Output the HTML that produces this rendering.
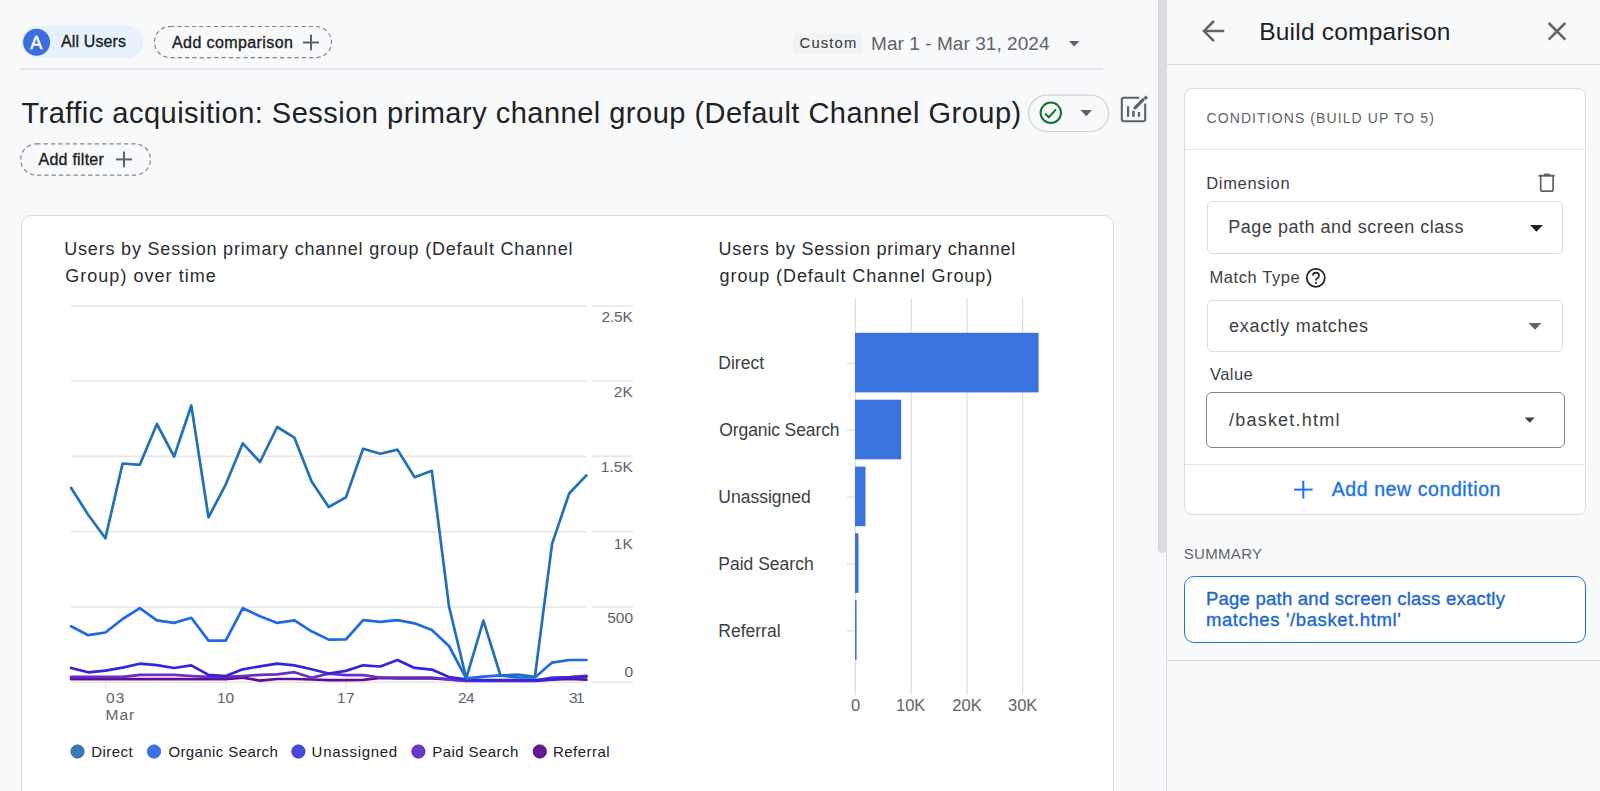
<!DOCTYPE html>
<html><head><meta charset="utf-8"><style>
html,body{margin:0;padding:0;}
body{width:1600px;height:791px;overflow:hidden;background:#f8f9fa;position:relative;font-family:"Liberation Sans",sans-serif;}
.abs{position:absolute;}
.t{position:absolute;white-space:nowrap;}
.box{position:absolute;box-sizing:border-box;}
</style></head><body>
<!-- top chips -->
<div class="box" style="left:21px;top:26px;width:122px;height:32px;border-radius:16px;background:#e8f0fe;"></div>

<div class="box" style="left:20px;top:68px;width:1083px;height:2px;background:#e3e5e8;"></div>
<div class="box" style="left:793.4px;top:33px;width:69.2px;height:21.4px;background:#f1f3f4;border-radius:2px;"></div>

<!-- main card -->
<div class="box" style="left:20.7px;top:215.3px;width:1093px;height:620px;border-radius:10px;border:1px solid #dadce0;background:#fff;"></div>
<!-- scrollbar & panel -->
<div class="box" style="left:1166px;top:0;width:1px;height:791px;background:#dadce0;"></div>
<div class="box" style="left:1158px;top:-10px;width:8.5px;height:562.5px;border-radius:0 0 4.5px 4.5px;background:#dadce0;border-left:1px solid #cfd1d5;"></div>
<div class="box" style="left:1167px;top:64px;width:433px;height:1px;background:#dadce0;"></div>
<div class="box" style="left:1183.8px;top:87.9px;width:402.6px;height:427.3px;border-radius:8px;border:1px solid #dadce0;background:#fff;"></div>
<div class="box" style="left:1184.5px;top:149px;width:401px;height:1px;background:#e3e5e8;"></div>
<div class="box" style="left:1184.5px;top:464px;width:401px;height:1px;background:#e3e5e8;"></div>
<div class="box" style="left:1206.8px;top:201.3px;width:356px;height:53px;border-radius:5px;border:1px solid #dadce0;"></div>
<div class="box" style="left:1207px;top:299.6px;width:356px;height:52.6px;border-radius:5px;border:1px solid #dadce0;"></div>
<div class="box" style="left:1205.5px;top:392.4px;width:359px;height:55.2px;border-radius:6px;border:1.2px solid #80868b;"></div>
<div class="box" style="left:1183.8px;top:576px;width:402.4px;height:67.3px;border-radius:10px;border:1.5px solid #1a73e8;background:#fff;"></div>
<div class="box" style="left:1167px;top:660px;width:433px;height:1.2px;background:#dadce0;"></div>

<svg class="abs" style="left:0;top:0" width="1160" height="791" viewBox="0 0 1160 791">
 <g stroke="#e6e6e8" stroke-width="1.6" fill="none">
  <line x1="71" y1="305.75" x2="586.5" y2="305.75"/><line x1="592" y1="305.75" x2="633" y2="305.75"/><line x1="71" y1="381.06" x2="586.5" y2="381.06"/><line x1="592" y1="381.06" x2="633" y2="381.06"/><line x1="71" y1="456.37" x2="586.5" y2="456.37"/><line x1="592" y1="456.37" x2="633" y2="456.37"/><line x1="71" y1="531.68" x2="586.5" y2="531.68"/><line x1="592" y1="531.68" x2="633" y2="531.68"/><line x1="71" y1="607.0" x2="586.5" y2="607.0"/><line x1="592" y1="607.0" x2="633" y2="607.0"/><line x1="71" y1="682.3" x2="586.5" y2="682.3"/><line x1="592" y1="682.3" x2="633" y2="682.3"/>
 </g>
 <g stroke="#e0e2e5" stroke-width="1">
  <line x1="105.4" y1="682" x2="105.4" y2="689"/><line x1="225.7" y1="682" x2="225.7" y2="689"/><line x1="345.9" y1="682" x2="345.9" y2="689"/><line x1="466.2" y1="682" x2="466.2" y2="689"/><line x1="586.4" y1="682" x2="586.4" y2="689"/>
 </g>
 <g fill="none" stroke-width="2.7" stroke-linejoin="round" stroke-linecap="round">
  <polyline stroke="#620c93" points="71.0,679.1 88.2,679.1 105.4,679.1 122.6,679.1 139.8,679.1 156.9,679.1 174.1,679.1 191.3,679.1 208.5,679.1 225.7,679.1 242.8,677.7 260.0,680.6 277.2,679.0 294.4,679.0 311.6,679.5 328.7,680.1 345.9,680.1 363.1,679.8 380.3,677.9 397.5,678.4 414.6,678.4 431.8,678.4 449.0,679.3 466.2,681.0 483.4,681.0 500.5,681.0 517.7,681.0 534.9,681.0 552.1,679.6 569.3,679.0 586.4,679.6"/>
  <polyline stroke="#682cc9" points="71.0,676.9 88.2,676.9 105.4,676.9 122.6,676.9 139.8,674.9 156.9,674.9 174.1,674.9 191.3,676.0 208.5,676.9 225.7,676.9 242.8,676.0 260.0,674.9 277.2,674.4 294.4,672.2 311.6,677.7 328.7,673.6 345.9,675.2 363.1,675.2 380.3,677.5 397.5,677.5 414.6,677.5 431.8,677.5 449.0,679.3 466.2,680.6 483.4,680.6 500.5,680.6 517.7,680.6 534.9,680.6 552.1,677.5 569.3,677.2 586.4,675.8"/>
  <polyline stroke="#3325de" points="71.0,668.0 88.2,672.3 105.4,670.7 122.6,667.6 139.8,663.7 156.9,665.1 174.1,668.0 191.3,665.4 208.5,674.9 225.7,676.1 242.8,669.3 260.0,666.3 277.2,663.7 294.4,665.4 311.6,669.3 328.7,673.5 345.9,670.9 363.1,665.3 380.3,666.5 397.5,660.0 414.6,667.9 431.8,669.6 449.0,677.0 466.2,679.3 483.4,680.1 500.5,680.1 517.7,680.1 534.9,680.1 552.1,679.3 569.3,677.5 586.4,676.6"/>
  <polyline stroke="#1f69e2" points="71.0,626.3 88.2,635.2 105.4,632.5 122.6,619.0 139.8,608.2 156.9,620.4 174.1,622.9 191.3,617.8 208.5,640.6 225.7,640.6 242.8,608.2 260.0,616.2 277.2,622.9 294.4,620.4 311.6,631.3 328.7,639.6 345.9,639.5 363.1,620.1 380.3,621.9 397.5,620.1 414.6,623.3 431.8,629.9 449.0,646.0 466.2,678.4 483.4,676.6 500.5,675.4 517.7,677.5 534.9,677.5 552.1,662.6 569.3,660.0 586.4,660.0"/>
  <polyline stroke="#2270b8" points="71.0,487.8 88.2,514.7 105.4,538.3 122.6,463.5 139.8,464.8 156.9,424.0 174.1,456.6 191.3,405.5 208.5,517.3 225.7,484.6 242.8,443.3 260.0,462.0 277.2,427.0 294.4,437.7 311.6,481.4 328.7,507.0 345.9,497.4 363.1,448.8 380.3,453.7 397.5,449.6 414.6,477.3 431.8,470.8 449.0,606.2 466.2,678.3 483.4,620.6 500.5,675.5 517.7,674.7 534.9,676.8 552.1,543.6 569.3,493.2 586.4,475.4"/>
 </g>
 <g>
  <circle cx="77.5" cy="751.5" r="6.6" fill="#3a78b5" stroke="#2f6db0" stroke-width="1"/>
  <circle cx="154" cy="751.5" r="6.6" fill="#3b74e0" stroke="#2f6ae0" stroke-width="1"/>
  <circle cx="298.4" cy="751.5" r="6.6" fill="#4848df" stroke="#3a38d8" stroke-width="1"/>
  <circle cx="418.4" cy="751.5" r="6.6" fill="#6a38c8" stroke="#5a2ac0" stroke-width="1"/>
  <circle cx="539.8" cy="751.5" r="6.6" fill="#66188f" stroke="#580c88" stroke-width="1"/>
 </g>
 <g stroke="#dadce0" stroke-width="1.2">
  <line x1="855.4" y1="298.6" x2="855.4" y2="695"/><line x1="911.2" y1="298.6" x2="911.2" y2="695"/><line x1="967" y1="298.6" x2="967" y2="695"/><line x1="1022.7" y1="298.6" x2="1022.7" y2="695"/>
  <line x1="847" y1="363.3" x2="855" y2="363.3"/><line x1="847" y1="430.2" x2="855" y2="430.2"/><line x1="847" y1="497.1" x2="855" y2="497.1"/><line x1="847" y1="564.0" x2="855" y2="564.0"/><line x1="847" y1="630.9" x2="855" y2="630.9"/>
 </g>
 <g fill="#3a72de">
  <rect x="855" y="332.8" width="183.6" height="59.6"/>
  <rect x="855" y="399.7" width="46.2" height="59.6"/>
  <rect x="855" y="466.6" width="10.5" height="59.6"/>
  <rect x="855" y="533.3" width="3.5" height="59.6"/>
  <rect x="855" y="600" width="1.6" height="59.6"/>
 </g>
</svg>

<svg class="abs" style="left:0;top:0" width="1600" height="791" viewBox="0 0 1600 791">
 <!-- All users avatar -->
 <circle cx="36.6" cy="42.3" r="13.5" fill="#3b6fe0"/>
 <rect x="154.5" y="26.5" width="177" height="31.1" rx="15.5" fill="none" stroke="#80868b" stroke-width="1.2" stroke-dasharray="4.3 3"/>
 <rect x="20.7" y="143.8" width="129.8" height="31.3" rx="15.65" fill="none" stroke="#80868b" stroke-width="1.2" stroke-dasharray="4.3 3"/>
 <!-- plus icons -->
 <g stroke="#5f6368" stroke-width="2" fill="none">
  <line x1="303" y1="42.5" x2="319" y2="42.5"/><line x1="311" y1="34.8" x2="311" y2="50.3"/>
  <line x1="116" y1="159.4" x2="132" y2="159.4"/><line x1="124" y1="151.6" x2="124" y2="167.2"/>
 </g>
 <!-- date dropdown -->
 <path d="M1069 41 L1079.4 41 L1074.2 46.4 Z" fill="#5f6368"/>
 <!-- check pill -->
 <rect x="1028.6" y="95.2" width="80" height="36.3" rx="18.15" fill="none" stroke="#d3d5d9" stroke-width="1.2"/>
 <circle cx="1050.8" cy="112.8" r="10.2" fill="none" stroke="#137333" stroke-width="2"/>
 <path d="M1045 113.6 L1048.8 117.2 L1056 109.3" fill="none" stroke="#137333" stroke-width="2"/>
 <path d="M1080.5 110 L1092 110 L1086.2 116.3 Z" fill="#5f6368"/>
 <!-- edit chart icon -->
 <path d="M1139.2 97.8 L1123.8 97.8 Q1121.8 97.8 1121.8 99.8 L1121.8 119.2 Q1121.8 121.2 1123.8 121.2 L1143.2 121.2 Q1145.2 121.2 1145.2 119.2 L1145.2 103.4" fill="none" stroke="#5f6368" stroke-width="2.1"/>
 <g fill="#5f6368">
  <rect x="1126.9" y="106.3" width="2.3" height="10.5"/>
  <rect x="1132.2" y="110.7" width="2.5" height="6.1"/>
  <rect x="1137.8" y="112" width="2.3" height="4.8"/>
 </g>
 <line x1="1135" y1="107.8" x2="1143" y2="99.8" stroke="#5f6368" stroke-width="3.2" stroke-linecap="round"/>
 <line x1="1144.6" y1="96.6" x2="1146.9" y2="98.9" stroke="#5f6368" stroke-width="3.2" transform="rotate(90 1145.75 97.75)"/>
 <!-- panel arrow -->
 <g stroke="#646464" stroke-width="2.5" fill="none">
  <path d="M1224.2 31.1 L1204.5 31.1 M1214 21 L1203.9 31.1 L1214 41.2"/>
  <path d="M1548.7 23 L1565.3 39.6 M1565.3 23 L1548.7 39.6"/>
 </g>
 <!-- trash -->
 <g fill="none" stroke="#5f6368" stroke-width="1.7">
  <path d="M1540.7 176 L1540.7 189.4 Q1540.7 191.1 1542.4 191.1 L1551.4 191.1 Q1553.1 191.1 1553.1 189.4 L1553.1 176"/>
 </g>
 <rect x="1538.5" y="174.7" width="16.2" height="2" fill="#5f6368"/>
 <rect x="1544" y="173.6" width="5.8" height="1.4" fill="#5f6368"/>
 <!-- select triangles -->
 <path d="M1530 225 L1543 225 L1536.5 231.7 Z" fill="#202124"/>
 <path d="M1528.6 323 L1541.5 323 L1535 329.8 Z" fill="#5f6368"/>
 <path d="M1524.7 417.4 L1534.7 417.4 L1529.7 422.7 Z" fill="#3c4043"/>
 <!-- help icon -->
 <circle cx="1315.8" cy="277.8" r="9.0" fill="none" stroke="#202124" stroke-width="1.7"/>
 <path d="M1313 275.6 Q1313 272.7 1316 272.7 Q1319 272.7 1319 275.4 Q1319 277 1317.4 278.1 Q1315.9 279.1 1315.9 280.6" fill="none" stroke="#202124" stroke-width="1.7"/>
 <circle cx="1315.9" cy="283.1" r="1.15" fill="#202124"/>
 <!-- blue plus -->
 <g stroke="#1a73e8" stroke-width="2" fill="none">
  <line x1="1294" y1="489.6" x2="1312.6" y2="489.6"/><line x1="1303.3" y1="480.7" x2="1303.3" y2="498.5"/>
 </g>
</svg>
<span class="t" style="left:30.3px;top:33.6px;font-size:18px;line-height:18px;color:#fff;-webkit-text-stroke:0.5px #fff;">A</span>
<span id="allusers" class="t" style="top:34.46px;font-size:16px;line-height:16px;color:#202124;font-weight:400;letter-spacing:0.124px;left:61.00px;-webkit-text-stroke:0.35px #202124;">All Users</span>
<span id="addcmp" class="t" style="top:34.56px;font-size:16px;line-height:16px;color:#202124;font-weight:400;letter-spacing:0.406px;left:172.00px;-webkit-text-stroke:0.35px #202124;">Add comparison</span>
<span id="custom" class="t" style="top:36.47px;font-size:14.8px;line-height:14.8px;color:#3c4043;font-weight:400;letter-spacing:1.149px;left:799.60px;-webkit-text-stroke:0.1px #3c4043;">Custom</span>
<span id="date" class="t" style="top:33.92px;font-size:19px;line-height:19px;color:#5f6368;font-weight:400;letter-spacing:0.061px;left:871.00px;">Mar 1 - Mar 31, 2024</span>
<span id="title" class="t" style="top:99.45px;font-size:29px;line-height:29px;color:#202124;font-weight:400;letter-spacing:0.491px;left:21.40px;">Traffic acquisition: Session primary channel group (Default Channel Group)</span>
<span id="addfilter" class="t" style="top:152.46px;font-size:16px;line-height:16px;color:#202124;font-weight:400;letter-spacing:0.243px;left:38.50px;-webkit-text-stroke:0.35px #202124;">Add filter</span>
<span id="lt1" class="t" style="top:240.26px;font-size:18px;line-height:18px;color:#2a2c30;font-weight:400;letter-spacing:0.816px;left:64.20px;">Users by Session primary channel group (Default Channel</span>
<span id="lt2" class="t" style="top:267.46px;font-size:18px;line-height:18px;color:#2a2c30;font-weight:400;letter-spacing:1.038px;left:65.20px;">Group) over time</span>
<span id="bt1" class="t" style="top:240.26px;font-size:18px;line-height:18px;color:#2a2c30;font-weight:400;letter-spacing:0.761px;left:718.60px;">Users by Session primary channel</span>
<span id="bt2" class="t" style="top:267.46px;font-size:18px;line-height:18px;color:#2a2c30;font-weight:400;letter-spacing:0.909px;left:719.60px;">group (Default Channel Group)</span>
<span id="y25" class="t" style="top:309.28px;font-size:15.5px;line-height:15.5px;color:#5f6368;font-weight:400;letter-spacing:-0.249px;left:601.60px;">2.5K</span>
<span id="y2" class="t" style="top:384.38px;font-size:15.5px;line-height:15.5px;color:#5f6368;font-weight:400;left:613.78px;">2K</span>
<span id="y15" class="t" style="top:459.48px;font-size:15.5px;line-height:15.5px;color:#5f6368;font-weight:400;left:600.85px;">1.5K</span>
<span id="y1" class="t" style="top:535.58px;font-size:15.5px;line-height:15.5px;color:#5f6368;font-weight:400;left:613.78px;">1K</span>
<span id="y500" class="t" style="top:609.88px;font-size:15.5px;line-height:15.5px;color:#5f6368;font-weight:400;left:607.16px;">500</span>
<span id="y0" class="t" style="top:663.68px;font-size:15.5px;line-height:15.5px;color:#5f6368;font-weight:400;left:624.40px;">0</span>
<span id="x03" class="t" style="top:690.18px;font-size:15.5px;line-height:15.5px;color:#5f6368;font-weight:400;letter-spacing:1.080px;left:106.00px;">03</span>
<span id="xmar" class="t" style="top:706.88px;font-size:15.5px;line-height:15.5px;color:#5f6368;font-weight:400;letter-spacing:0.984px;left:105.50px;">Mar</span>
<span id="x10" class="t" style="top:690.18px;font-size:15.5px;line-height:15.5px;color:#5f6368;font-weight:400;letter-spacing:-0.120px;left:216.90px;">10</span>
<span id="x17" class="t" style="top:690.18px;font-size:15.5px;line-height:15.5px;color:#5f6368;font-weight:400;letter-spacing:0.380px;left:337.00px;">17</span>
<span id="x24" class="t" style="top:690.18px;font-size:15.5px;line-height:15.5px;color:#5f6368;font-weight:400;letter-spacing:-0.620px;left:458.00px;">24</span>
<span id="x31" class="t" style="top:690.18px;font-size:15.5px;line-height:15.5px;color:#5f6368;font-weight:400;letter-spacing:-1.620px;left:569.00px;">31</span>
<span id="lg1" class="t" style="top:743.90px;font-size:15px;line-height:15px;color:#202124;font-weight:400;letter-spacing:0.440px;left:91.30px;">Direct</span>
<span id="lg2" class="t" style="top:743.90px;font-size:15px;line-height:15px;color:#202124;font-weight:400;letter-spacing:0.402px;left:168.40px;">Organic Search</span>
<span id="lg3" class="t" style="top:743.90px;font-size:15px;line-height:15px;color:#202124;font-weight:400;letter-spacing:0.703px;left:311.60px;">Unassigned</span>
<span id="lg4" class="t" style="top:743.90px;font-size:15px;line-height:15px;color:#202124;font-weight:400;letter-spacing:0.443px;left:432.20px;">Paid Search</span>
<span id="lg5" class="t" style="top:743.90px;font-size:15px;line-height:15px;color:#202124;font-weight:400;letter-spacing:0.455px;left:553.00px;">Referral</span>
<span id="bl1" class="t" style="top:355.39px;font-size:17.5px;line-height:17.5px;color:#3c4043;font-weight:400;left:718.30px;">Direct</span>
<span id="bl2" class="t" style="top:421.89px;font-size:17.5px;line-height:17.5px;color:#3c4043;font-weight:400;letter-spacing:-0.104px;left:719.30px;">Organic Search</span>
<span id="bl3" class="t" style="top:488.79px;font-size:17.5px;line-height:17.5px;color:#3c4043;font-weight:400;left:718.30px;">Unassigned</span>
<span id="bl4" class="t" style="top:555.69px;font-size:17.5px;line-height:17.5px;color:#3c4043;font-weight:400;left:718.30px;">Paid Search</span>
<span id="bl5" class="t" style="top:622.59px;font-size:17.5px;line-height:17.5px;color:#3c4043;font-weight:400;left:718.30px;">Referral</span>
<span id="bx0" class="t" style="top:697.33px;font-size:16.5px;line-height:16.5px;color:#5f6368;font-weight:400;left:850.90px;">0</span>
<span id="bx1" class="t" style="top:697.33px;font-size:16.5px;line-height:16.5px;color:#5f6368;font-weight:400;left:896.02px;">10K</span>
<span id="bx2" class="t" style="top:697.33px;font-size:16.5px;line-height:16.5px;color:#5f6368;font-weight:400;left:952.32px;">20K</span>
<span id="bx3" class="t" style="top:697.33px;font-size:16.5px;line-height:16.5px;color:#5f6368;font-weight:400;left:1008.02px;">30K</span>
<span id="build" class="t" style="top:19.86px;font-size:24.5px;line-height:24.5px;color:#202124;font-weight:400;letter-spacing:0.220px;left:1259.20px;">Build comparison</span>
<span id="cond" class="t" style="top:111.15px;font-size:14px;line-height:14px;color:#5f6368;font-weight:400;letter-spacing:1.097px;left:1206.50px;">CONDITIONS (BUILD UP TO 5)</span>
<span id="dim" class="t" style="top:174.93px;font-size:16.5px;line-height:16.5px;color:#3c4043;font-weight:400;letter-spacing:0.691px;left:1206.20px;">Dimension</span>
<span id="ppath" class="t" style="top:218.26px;font-size:18px;line-height:18px;color:#3c4043;font-weight:400;letter-spacing:0.518px;left:1228.30px;">Page path and screen class</span>
<span id="mtype" class="t" style="top:269.43px;font-size:16.5px;line-height:16.5px;color:#3c4043;font-weight:400;letter-spacing:0.588px;left:1209.40px;">Match Type</span>
<span id="exact" class="t" style="top:316.86px;font-size:18px;line-height:18px;color:#3c4043;font-weight:400;letter-spacing:0.711px;left:1229.00px;">exactly matches</span>
<span id="value" class="t" style="top:365.93px;font-size:16.5px;line-height:16.5px;color:#3c4043;font-weight:400;letter-spacing:0.450px;left:1210.00px;">Value</span>
<span id="basket" class="t" style="top:410.86px;font-size:18px;line-height:18px;color:#3c4043;font-weight:400;letter-spacing:1.214px;left:1229.00px;">/basket.html</span>
<span id="addcond" class="t" style="top:480.29px;font-size:19.5px;line-height:19.5px;color:#1a73e8;font-weight:400;letter-spacing:0.586px;left:1331.70px;-webkit-text-stroke:0.35px #1a73e8;">Add new condition</span>
<span id="summary" class="t" style="top:546.30px;font-size:15px;line-height:15px;color:#5f6368;font-weight:400;letter-spacing:0.301px;left:1183.80px;">SUMMARY</span>
<span id="s1" class="t" style="top:589.84px;font-size:18.5px;line-height:18.5px;color:#1967d2;font-weight:400;letter-spacing:0.243px;left:1205.90px;-webkit-text-stroke:0.35px #1967d2;">Page path and screen class exactly</span>
<span id="s2" class="t" style="top:611.34px;font-size:18.5px;line-height:18.5px;color:#1967d2;font-weight:400;letter-spacing:0.618px;left:1205.90px;-webkit-text-stroke:0.35px #1967d2;">matches '/basket.html'</span>
</body></html>
